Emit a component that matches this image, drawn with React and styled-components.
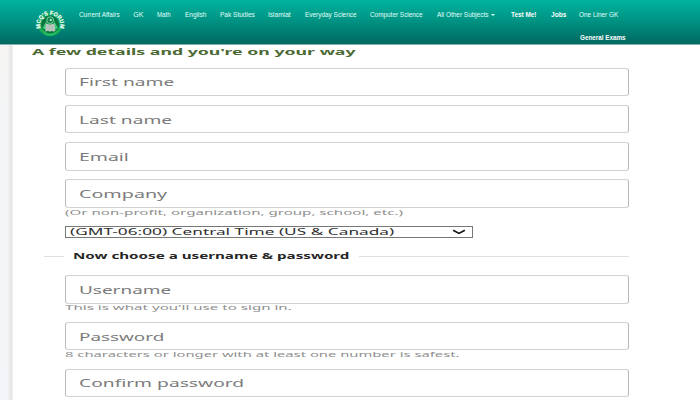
import React, { useLayoutEffect, useRef, useState } from "react";
import styled, { createGlobalStyle } from "styled-components";

const GlobalStyle = createGlobalStyle`
  *, *::before, *::after { box-sizing: border-box; }
  body { margin: 0; background: #fff; overflow: hidden; }
`;

const Page = styled.div`
  width: 700px;
  height: 400px;
  overflow: hidden;
  display: flex;
  flex-direction: column;
  font-family: "Noto Sans", "Open Sans", sans-serif;
`;

const Header = styled.header`
  flex: none;
  height: 45px;
  display: flex;
  align-items: flex-start;
  padding-left: 35px;
  background: linear-gradient(#00b29e 0, #009484 20px, #006860 44px);
  border-bottom: 1px solid #7fb5b0;
  background-clip: padding-box;
`;

const Logo = styled.svg`
  flex: none;
  width: 30px;
  height: 30px;
  margin-top: 8px;
  overflow: visible;
`;

const Nav = styled.nav`
  display: flex;
  flex-wrap: wrap;
  column-gap: 13.75px;
  row-gap: 11.5px;
  width: 560px;
  margin: 9px 0 0 13.5px;
  font: 7px/10px "Liberation Sans", Arial, sans-serif;
  color: #e2fffa;
`;

const NavItem = styled.a`
  display: flex;
  align-items: center;
  gap: 3px;
  font-weight: ${(p) => (p.$bold ? 700 : 400)};
  color: ${(p) => (p.$bold ? "#fff" : "inherit")};
  margin-left: ${(p) => p.$indent || 0}px;
  padding-top: ${(p) => (p.$bold ? 1 : 0)}px;
`;

const Caret = styled.i`
  border: 2px solid transparent;
  border-top-color: #e2fffa;
  border-bottom: 0;
`;

const Body = styled.main`
  flex: 1;
  display: flex;
  min-height: 0;
`;

const Gutter = styled.aside`
  flex: none;
  width: 14px;
  background:
    linear-gradient(90deg, transparent 8px, #e3e4e5 11px, #e6e7e8 12px, #fcfcfc 13px, #fff 14px),
    linear-gradient(#f6f5f3, #f3f5f7 90px, #f3f5f8);
`;

const Form = styled.form`
  flex: none;
  width: 615px;
  display: flex;
  flex-direction: column;
`;

const Title = styled.h1`
  margin: 0 0 0 18px;
  height: 22.5px;
  padding-top: 1px;
  font-size: 8.8px;
  line-height: 13px;
  color: #4c6a34;
`;

const Field = styled.label`
  flex: none;
  height: 28.5px;
  margin: 0 0 ${(p) => p.$gap ?? 8.8}px 51px;
  padding: 1px 0 0 12.5px;
  display: flex;
  align-items: center;
  border: 1px solid #d2d2d2;
  border-left-color: #bcbcbc;
  border-right: 1.5px solid #b9b9b9;
  border-radius: 3px;
  font-size: 10.3px;
  line-height: 14px;
  color: #7b7b7b;
`;

const Hint = styled.p`
  flex: none;
  margin: -1.4px 0 0 51px;
  height: ${(p) => p.$height + 1.4}px;
  font-size: 7.2px;
  line-height: 10px;
  color: #8f8f8f;
`;

const Select = styled.div`
  flex: none;
  width: 408px;
  height: 12px;
  margin-left: 51px;
  padding: 0 6px 0 4px;
  display: flex;
  align-items: center;
  justify-content: space-between;
  border: 1px solid #777;
  font-size: 9px;
  line-height: 10px;
  color: #303030;
`;

const Chevron = styled.svg`
  width: 14px;
  height: 6px;
`;

const Divider = styled.div`
  flex: none;
  height: 36.7px;
  margin-left: 30px;
  padding-top: 12px;
  display: flex;
  align-items: flex-start;
  gap: 9px;
  font-size: 8.6px;
  font-weight: 700;
  line-height: 13px;
  color: #262626;
`;

const Rule = styled.span`
  flex: ${(p) => (p.$width ? "none" : 1)};
  width: ${(p) => p.$width || 0}px;
  height: 1px;
  margin-top: 5.5px;
  background: #e0e0e0;
`;

const FitBox = styled.span`
  display: block;
  flex: none;
  width: ${(p) => p.$width}px;
  white-space: nowrap;
`;

const FitText = styled.span`
  display: inline-block;
  transform-origin: 0 50%;
`;

/* Stretches a line of text horizontally to a given width. */
function Fit({ width, children }) {
  const ref = useRef(null);
  const [scale, setScale] = useState(1);
  useLayoutEffect(() => {
    setScale(width / ref.current.offsetWidth);
  }, [width, children]);
  return (
    <FitBox $width={width}>
      <FitText ref={ref} style={{ transform: `scaleX(${scale})` }}>
        {children}
      </FitText>
    </FitBox>
  );
}

const links = [
  { label: "Current Affairs", width: 41 },
  { label: "GK", width: 10 },
  { label: "Math", width: 14 },
  { label: "English", width: 21.5 },
  { label: "Pak Studies", width: 34.5 },
  { label: "Islamiat", width: 22.5 },
  { label: "Everyday Science", width: 51.5 },
  { label: "Computer Science", width: 53 },
  { label: "All Other Subjects", width: 51.5, caret: true },
  { label: "Test Me!", width: 25.5, bold: true, indent: 2.5 },
  { label: "Jobs", width: 15, bold: true },
  { label: "One Liner GK", width: 39.5 },
  { label: "General Exams", width: 46, bold: true, indent: 501.5 },
];

function Brand() {
  return (
    <Logo viewBox="0 0 30 30">
      <defs>
        <path id="ring" d="M5.8 20.2A10 10 0 1 1 24.6 20.2" />
      </defs>
      <circle cx="15.2" cy="15.6" r="12.6" fill="#0ba366" />
      <path d="M3.4 19.5A12.6 12.6 0 0 0 27 19.5Z" fill="#18ad52" />
      <circle cx="15.2" cy="16.5" r="9" fill="#08783f" />
      <path d="M6.5 21Q15 31 24 21L21 25Q15 30 9 25Z" fill="#29c16b" />
      <path d="M7.5 20l4-7 1 10zM23 20l-4-7-1 10z" fill="#3ccb79" />
      <circle cx="15.2" cy="12.2" r="3.4" fill="#13854c" stroke="#82dfaa" strokeWidth="0.9" />
      <circle cx="15.8" cy="12" r="1.1" fill="#d4f5df" />
      <path d="M10.6 15.5l4.4 1 4.5-1 .9 7.2-2.2 1-1.2-1-2 1-2-1-2.6 1z" fill="#b4c4ba" />
      <text
        fontFamily="Liberation Sans"
        fontWeight="700"
        fontSize="5.8"
        fill="#eafff2"
        stroke="#eafff2"
        strokeWidth="0.25"
      >
        <textPath href="#ring" textLength="38" lengthAdjust="spacingAndGlyphs">MCQ'S FORUM</textPath>
      </text>
    </Logo>
  );
}

export default function App() {
  return (
    <Page>
      <GlobalStyle />
      <Header>
        <Brand />
        <Nav>
          {links.map((l) => (
            <NavItem key={l.label} $bold={l.bold} $indent={l.indent}>
              <Fit width={l.width}>{l.label}</Fit>
              {l.caret && <Caret />}
            </NavItem>
          ))}
        </Nav>
      </Header>
      <Body>
        <Gutter />
        <Form>
          <Title><Fit width={324}>A few details and you're on your way</Fit></Title>
          <Field><Fit width={95}>First name</Fit></Field>
          <Field><Fit width={93}>Last name</Fit></Field>
          <Field><Fit width={49}>Email</Fit></Field>
          <Field $gap={0}><Fit width={88}>Company</Fit></Field>
          <Hint $height={18.5}>
            <Fit width={338}>(Or non-profit, organization, group, school, etc.)</Fit>
          </Hint>
          <Select>
            <Fit width={324}>(GMT-06:00) Central Time (US &amp; Canada)</Fit>
            <Chevron viewBox="0 0 14 6">
              <path d="M1.2 1.2L7 4.4 12.8 1.2" fill="none" stroke="#111" strokeWidth="1.7" />
            </Chevron>
          </Select>
          <Divider>
            <Rule $width={20} />
            <Fit width={277}>Now choose a username &amp; password</Fit>
            <Rule />
          </Divider>
          <Field $gap={0}><Fit width={92}>Username</Fit></Field>
          <Hint $height={18.3}>
            <Fit width={227}>This is what you'll use to sign in.</Fit>
          </Hint>
          <Field $gap={0}><Fit width={86}>Password</Fit></Field>
          <Hint $height={18.3}>
            <Fit width={395}>8 characters or longer with at least one number is safest.</Fit>
          </Hint>
          <Field $gap={0}><Fit width={166}>Confirm password</Fit></Field>
        </Form>
      </Body>
    </Page>
  );
}
